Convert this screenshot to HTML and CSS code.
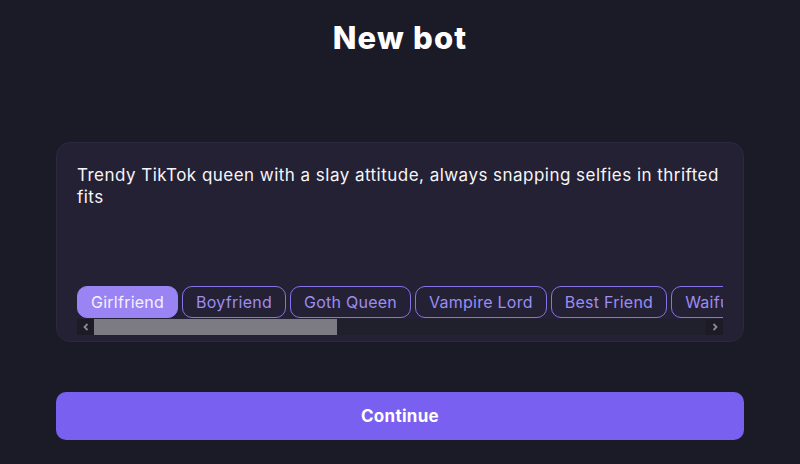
FILE: index.html
```
<!DOCTYPE html>
<html>
<head>
<meta charset="utf-8">
<link rel="stylesheet" href="styles.css">
</head>
<body>
<main class="page">
  <h1 class="title">New bot</h1>
  <section class="card">
    <div class="prompt">Trendy TikTok queen with a slay attitude, always snapping selfies in thrifted fits</div>
    <div class="tags-wrap">
      <div class="tags">
        <span class="tag active">Girlfriend</span>
        <span class="tag">Boyfriend</span>
        <span class="tag">Goth Queen</span>
        <span class="tag">Vampire Lord</span>
        <span class="tag">Best Friend</span>
        <span class="tag">Waifu</span>
      </div>
      <div class="scrollbar">
        <span class="sb-btn"><svg width="16" height="16" viewBox="0 0 16 16"><path d="M9.5 5 L6.5 8 L9.5 11" fill="none" stroke="#8a8994" stroke-width="1.8"/></svg></span>
        <span class="sb-track"><span class="sb-thumb"></span></span>
        <span class="sb-btn"><svg width="16" height="16" viewBox="0 0 16 16"><path d="M6.5 5 L9.5 8 L6.5 11" fill="none" stroke="#8a8994" stroke-width="1.8"/></svg></span>
      </div>
    </div>
  </section>
  <button class="continue">Continue</button>
</main>
</body>
</html>
```
FILE: styles.css
```
html, body {
  margin: 0;
  padding: 0;
  background: #1b1a27;
}
.page {
  display: flex;
  flex-direction: column;
  padding: 0 56px;
  font-family: Inter, "Noto Sans", sans-serif;
  height: 464px;
  box-sizing: border-box;
}
.title {
  margin: 20px 0 0;
  height: 36px;
  line-height: 36px;
  text-align: center;
  color: #ffffff;
  font-size: 31px;
  font-weight: 800;
  letter-spacing: 1.2px;
}
.card {
  margin-top: 86px;
  height: 200px;
  box-sizing: border-box;
  background: #232133;
  border: 1px solid #2b2940;
  border-radius: 14px;
  padding: 21px 20px 6px 20px;
  display: flex;
  flex-direction: column;
}
.prompt {
  color: #f6f5fa;
  font-size: 17px;
  letter-spacing: 0.47px;
  line-height: 22px;
  flex: 1;
}
.tags-wrap {
  display: flex;
  flex-direction: column;
}
.tags {
  display: flex;
  gap: 4px;
  overflow: hidden;
  white-space: nowrap;
}
.tag {
  flex: none;
  height: 32px;
  box-sizing: border-box;
  padding: 0 13px;
  border: 1px solid #8673e6;
  border-radius: 10px;
  color: #9d8cf2;
  font-size: 16px;
  letter-spacing: 0.25px;
  line-height: 30px;
}
.tag.active {
  background: #9a83f3;
  border-color: #9a83f3;
  color: #f4f1ff;
}
.scrollbar {
  display: flex;
  height: 16px;
  margin-top: 1px;
  background: #201f2c;
}
.sb-btn {
  flex: none;
  width: 17px;
  height: 16px;
  display: flex;
  align-items: center;
  justify-content: center;
  background: #1c1b26;
}
.sb-track {
  flex: 1;
  display: flex;
}
.sb-thumb {
  width: 243px;
  height: 16px;
  background: #7c7b83;
}
.continue {
  margin-top: 50px;
  height: 48px;
  border: none;
  border-radius: 10px;
  background: #7a60f0;
  color: #ffffff;
  font-family: Inter, "Noto Sans", sans-serif;
  font-size: 17px;
  letter-spacing: 0.3px;
  font-weight: 700;
}
```
